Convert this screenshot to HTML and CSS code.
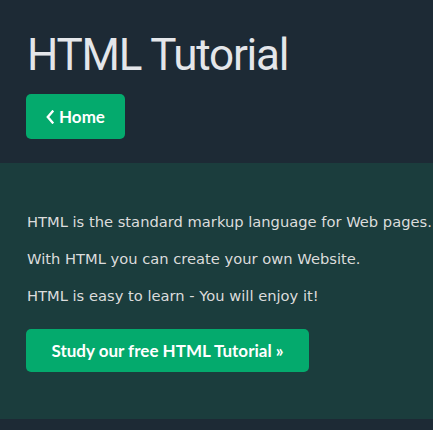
FILE: index.html
```html
<!DOCTYPE html>
<html lang="en">
<head>
<meta charset="utf-8">
<title>HTML Tutorial</title>
<link rel="stylesheet" href="styles.css">
</head>
<body>
<header class="top">
  <h1 class="title">HTML Tutorial</h1>
  <a class="btn btn-home" href="#"><svg class="chev" viewBox="0 0 8 14" width="8" height="14" aria-hidden="true"><path d="M6.5 1.5 L1.8 7 L6.5 12.5" fill="none" stroke="#fff" stroke-width="2.4" stroke-linecap="square"/></svg>Home</a>
</header>
<section class="intro">
  <p>HTML is the standard markup language for Web pages.</p>
  <p>With HTML you can create your own Website.</p>
  <p>HTML is easy to learn - You will enjoy it!</p>
  <a class="btn btn-study" href="#">Study our free HTML Tutorial &raquo;</a>
</section>
</body>
</html>
```
FILE: styles.css
```css
html, body {
  margin: 0;
  padding: 0;
  background: #1d2a35;
}
body {
  overflow: hidden;
}
.top {
  padding: 29px 0 24px 27px;
}
.title {
  margin: 0;
  font-family: "Roboto", "Open Sans", sans-serif;
  font-weight: 400;
  font-size: 44px;
  line-height: 52px;
  letter-spacing: -1.2px;
  color: #e4e6ea;
}
.btn {
  display: flex;
  align-items: center;
  justify-content: center;
  background: #04aa6d;
  color: #fff;
  text-decoration: none;
  border-radius: 5px;
  font-family: "Lato", "Open Sans", sans-serif;
  font-weight: 700;
}
.btn-home {
  margin-top: 13px;
  margin-left: -1px;
  width: 99px;
  height: 45px;
  font-size: 17px;
  gap: 5px;
}
.chev { display: block; }
.intro {
  background: #1b3d3d;
  padding: 48px 0 47px 27px;
}
.intro p {
  margin: 0 0 15px 0;
  font-family: "DejaVu Sans", Verdana, sans-serif;
  font-size: 14.7px;
  line-height: 22px;
  color: #dcdcdc;
  white-space: nowrap;
}
.btn-study {
  margin-top: 22px;
  margin-left: -1px;
  width: 283px;
  height: 43px;
  font-size: 17px;
}
```
